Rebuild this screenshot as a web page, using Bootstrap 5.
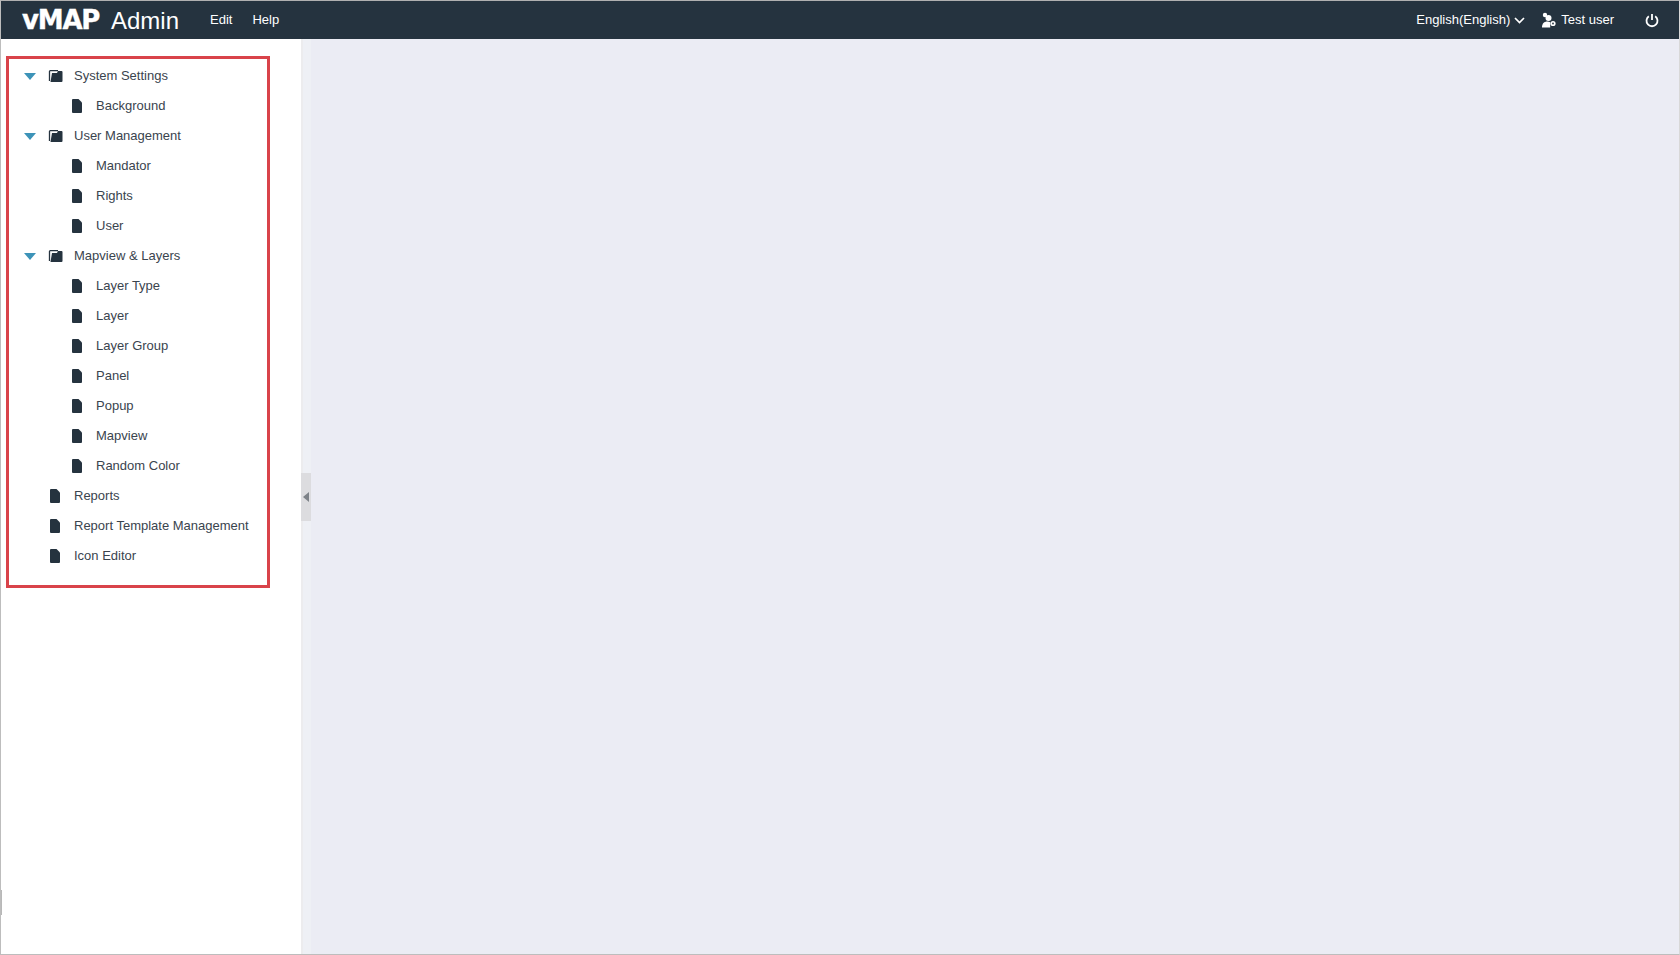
<!DOCTYPE html>
<html lang="en">
<head>
    <meta charset="UTF-8" />
    <title>vMAP Admin</title>
    <link href="https://cdn.jsdelivr.net/npm/bootstrap@5.3.0/dist/css/bootstrap.min.css" rel="stylesheet" />
    <style>
        html, body { height: 100%; }
        body {
            font-family: "Liberation Sans", Arial, sans-serif;
            font-size: 13px;
            color: #3a444e;
            background: #fff;
            border: 1px solid #bdbdbd;
            border-right-color: #d8d8d8;
            border-top-color: #b0b0b0;
            overflow: hidden;
            position: relative;
        }
        .top-bar { height: 38px; background: #25333f; color: #fff; padding: 0 20px 0 21px; }
        .logo-mark { font-family: "DejaVu Sans", sans-serif; font-size: 26px; font-weight: 700; letter-spacing: -1.2px; line-height: 1; width: 84px; -webkit-text-stroke: .4px #fff; }
        .logo-name { font-size: 24px; line-height: 1; width: 78px; margin-top: 2px; margin-left: 5px; }
        .menu-item { font-size: 13px; color: #fff; text-decoration: none; }
        .main-area { height: calc(100% - 38px); }
        .side-panel { width: 300px; background: #fff; flex: none; padding: 17px 0 0 5px; }
        .red-box { width: 264px; height: 532px; border: 3px solid #d9434a; padding: 2px 0 0 15px; }
        .tree-row { height: 30px; }
        .tree-caret { width: 12px; flex: none; margin-right: 12px; }
        .tree-spacer { width: 26px; flex: none; }
        .tree-child { padding-left: 48px; }
        .tree-folder { width: 15px; flex: none; margin-right: 11px; }
        .tree-file { width: 10px; flex: none; margin-right: 14px; }
        .splitter { width: 10px; flex: none; background: #eef0f5; border-left: 2px solid #ececee; }
        .splitter-grip { height: 48px; margin-top: 434px; margin-left: -2px; background: #dcdcdf; padding-left: 2px; }
        .work-area { background: #ebecf4; }
        .edge-mark { position: absolute; left: -1px; top: 889px; width: 2px; height: 25px; background: #b8b8b8; }
    </style>
</head>
<body>

<div class="top-bar d-flex align-items-center">
    <span class="logo-mark">vMAP</span>
    <span class="logo-name">Admin</span>
    <a class="menu-item" href="#" style="margin-left: 21px">Edit</a>
    <a class="menu-item" href="#" style="margin-left: 20px">Help</a>

    <div class="ms-auto d-flex align-items-center">
        <span class="d-flex align-items-center gap-1">English(English)
            <svg width="11" height="7" viewBox="0 0 11 7"><path d="M1 1l4.500 4.500L10 1" fill="none" stroke="#fff" stroke-width="1.700"/></svg>
        </span>
        <span class="d-flex align-items-center" style="margin-left: 17px">
            <svg width="14" height="16" viewBox="0 0 14 16" fill="#fff">
                <circle cx="3" cy="3" r="2.200"/>
                <circle cx="6.500" cy="6" r="3"/>
                <path d="M0 15.500c0-4 2-6 5.500-6 1 0 2 .3 2.700 .8v5.200z"/>
                <circle cx="11" cy="11.500" r="2.600"/>
                <circle cx="11" cy="11.500" r=".9" fill="#25333f"/>
            </svg>
            <span style="margin-left: 5px">Test user</span>
        </span>
        <svg style="margin-left: 31px" width="14" height="15" viewBox="0 0 14 15" fill="none" stroke="#fff" stroke-width="1.800">
            <path d="M7 1v6"/>
            <path d="M3.800 3.300a5.500 5.500 0 1 0 6.400 0"/>
        </svg>
    </div>
</div>

<div class="main-area d-flex">
    <div class="side-panel">
        <div class="red-box" id="tree"></div>
    </div>
    <div class="splitter">
        <div class="splitter-grip d-flex align-items-center">
            <svg width="6" height="10" viewBox="0 0 6 10"><path d="M6 0v10L0 5z" fill="#7d8288"/></svg>
        </div>
    </div>
    <div class="work-area flex-grow-1"></div>
</div>

<div class="edge-mark"></div>

<script>
    const caretIcon = '<svg class="tree-caret" height="7" viewBox="0 0 12 7"><path d="M0 0h12L6 7z" fill="#3d93b8"/></svg>';
    const folderIcon = '<svg class="tree-folder" height="12" viewBox="0 0 15 12"><path d="M1.500 11V1.500a.8 .8 0 0 1 .8-.8h7.700" fill="none" stroke="#25333f" stroke-width="1.300"/><path d="M4 3h5l1-2h3.500a1 1 0 0 1 1 1v9a1 1 0 0 1-1 1H2.500z" fill="#25333f"/></svg>';
    const fileIcon = '<svg class="tree-file" height="14" viewBox="0 0 10 14"><path d="M1 0H6.500L10 3.500V13a1 1 0 0 1-1 1H1a1 1 0 0 1-1-1V1a1 1 0 0 1 1-1z" fill="#25333f"/></svg>';

    const tree = [
        ['folder', 'System Settings'],
        ['child', 'Background'],
        ['folder', 'User Management'],
        ['child', 'Mandator'],
        ['child', 'Rights'],
        ['child', 'User'],
        ['folder', 'Mapview & Layers'],
        ['child', 'Layer Type'],
        ['child', 'Layer'],
        ['child', 'Layer Group'],
        ['child', 'Panel'],
        ['child', 'Popup'],
        ['child', 'Mapview'],
        ['child', 'Random Color'],
        ['leaf', 'Reports'],
        ['leaf', 'Report Template Management'],
        ['leaf', 'Icon Editor']
    ];

    function rowHtml(kind, label) {
        const text = label.replace('&', '&amp;');
        if (kind === 'folder') {
            return `<div class="tree-row d-flex align-items-center">${caretIcon}${folderIcon}<span>${text}</span></div>`;
        }
        if (kind === 'child') {
            return `<div class="tree-row tree-child d-flex align-items-center">${fileIcon}<span>${text}</span></div>`;
        }
        return `<div class="tree-row d-flex align-items-center"><span class="tree-spacer"></span>${fileIcon}<span>${text}</span></div>`;
    }

    document.getElementById('tree').innerHTML = tree.map(r => rowHtml(r[0], r[1])).join('');
</script>

<script src="https://cdn.jsdelivr.net/npm/bootstrap@5.3.0/dist/js/bootstrap.bundle.min.js"></script>
</body>
</html>
